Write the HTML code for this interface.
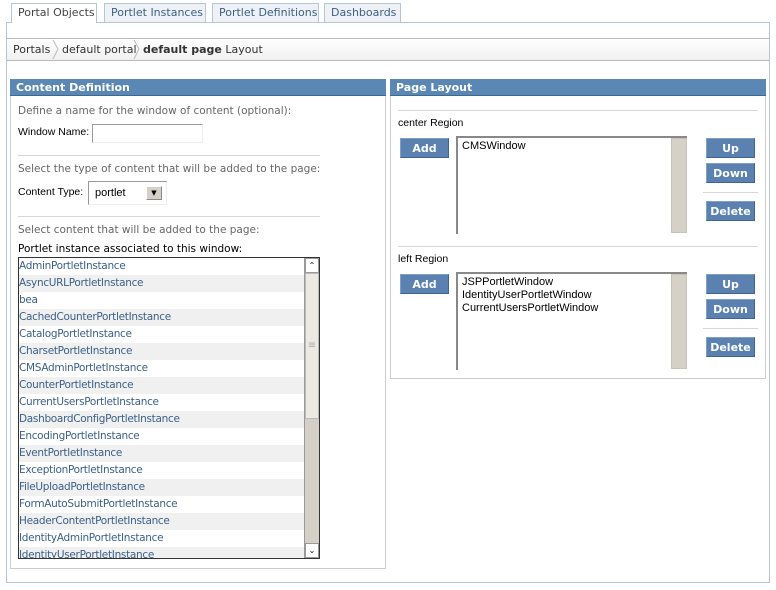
<!DOCTYPE html>
<html><head><meta charset="utf-8"><style>
*{margin:0;padding:0;box-sizing:border-box}
body{width:776px;height:590px;background:#fff;font-family:"DejaVu Sans","Liberation Sans",sans-serif;font-size:10.5px;color:#000;position:relative;overflow:hidden}
.a{position:absolute}
.tab{position:absolute;top:3px;height:20px;border:1px solid #b7c6d0;border-bottom:none;background:#eef2f6;color:#3a5f88;font-size:11px;line-height:17px;padding-left:6px}
.tab.on{background:#fff;color:#444;height:20px}
.hdr{position:absolute;height:17px;background:#5a87b3;color:#fff;font-weight:bold;font-size:11px;line-height:17px;padding-left:6px;border-bottom:1px solid #3f6891}
.btn{position:absolute;width:49px;height:20px;background:#5a81b0;color:#fff;font-weight:bold;font-size:11px;text-align:center;line-height:19px;border:1px solid #3d6590;border-top-color:#7f9fc4;border-left-color:#7f9fc4}
.hr{position:absolute;height:1px;background:#d6d6d6}
.g{color:#666}
.lab{font-family:"Liberation Sans",sans-serif;font-size:10.5px}
.ta{position:absolute;background:#fff;border:2px solid #888;border-right:none;border-bottom:none;font-family:"Liberation Sans",sans-serif;font-size:11px;padding:2px 4px;line-height:13px}
.sb{position:absolute;width:16px;background:#d6d1c7;border:1px solid #c8c3b8}
.li{height:17px;line-height:17px;color:#3a5f88;padding-left:0;white-space:nowrap;letter-spacing:-0.3px}
.li:nth-child(even){background:#f0f0f0}
</style></head><body>
<div class="tab on" style="left:11px;width:86px">Portal Objects</div>
<div class="tab" style="left:104px;width:102px">Portlet Instances</div>
<div class="tab" style="left:212px;width:107px">Portlet Definitions</div>
<div class="tab" style="left:324px;width:77px">Dashboards</div>
<div class="a" style="left:6px;top:22px;width:764px;height:561px;border:1px solid #b7c6d0"></div>
<div class="a" style="left:12px;top:22px;width:84px;height:1px;background:#fff"></div>
<div class="a" style="left:7px;top:38px;width:762px;height:23px;border-top:1px solid #bbb;border-bottom:1px solid #bbb;background:linear-gradient(#fff,#f0f0f0);font-size:11px;line-height:21px;color:#333">
<span style="position:absolute;left:6px">Portals</span>
<svg style="position:absolute;left:45px;top:0" width="8" height="21"><path d="M1 1 L6 10 L1 20" fill="none" stroke="#bbb"/></svg>
<span style="position:absolute;left:55px">default portal</span>
<svg style="position:absolute;left:126px;top:0" width="8" height="21"><path d="M1 1 L6 10 L1 20" fill="none" stroke="#bbb"/></svg>
<span style="position:absolute;left:136px"><b>default page</b> Layout</span>
</div>

<div class="a" style="left:10px;top:79px;width:376px;height:490px;border:1px solid #ccc"></div>
<div class="hdr" style="left:10px;top:79px;width:376px">Content Definition</div>
<div class="a g" style="left:18px;top:105px">Define a name for the window of content (optional):</div>
<div class="a lab" style="left:18px;top:126px">Window Name:</div>
<div class="a" style="left:92px;top:124px;width:111px;height:19px;border:1px solid #999;border-right-color:#eee;border-bottom-color:#eee"></div>
<div class="hr" style="left:18px;top:155px;width:302px"></div>
<div class="a g" style="left:18px;top:163px">Select the type of content that will be added to the page:</div>
<div class="a lab" style="left:18px;top:186px">Content Type:</div>
<div class="a" style="left:88px;top:181px;width:79px;height:24px;border:1px solid #999;border-right-color:#eee;border-bottom-color:#eee;font-family:'Liberation Sans',sans-serif;font-size:11px;padding:5px 6px">portlet</div>
<div class="a" style="left:146px;top:186px;width:16px;height:14px;border:1px solid #888;border-left-color:#fff;border-top-color:#fff;background:#d4d0c8;font-size:7px;text-align:center;line-height:12px">▼</div>
<div class="hr" style="left:18px;top:216px;width:302px"></div>
<div class="a g" style="left:18px;top:224px">Select content that will be added to the page:</div>
<div class="a" style="left:18px;top:243px">Portlet instance associated to this window:</div>
<div class="a" style="left:18px;top:257px;width:302px;height:302px;border:1px solid #333;overflow:hidden;background:#fff">
<div style="position:absolute;left:0;top:0;width:286px">
<div class="li">AdminPortletInstance</div><div class="li">AsyncURLPortletInstance</div><div class="li">bea</div><div class="li">CachedCounterPortletInstance</div><div class="li">CatalogPortletInstance</div><div class="li">CharsetPortletInstance</div><div class="li">CMSAdminPortletInstance</div><div class="li">CounterPortletInstance</div><div class="li">CurrentUsersPortletInstance</div><div class="li">DashboardConfigPortletInstance</div><div class="li">EncodingPortletInstance</div><div class="li">EventPortletInstance</div><div class="li">ExceptionPortletInstance</div><div class="li">FileUploadPortletInstance</div><div class="li">FormAutoSubmitPortletInstance</div><div class="li">HeaderContentPortletInstance</div><div class="li">IdentityAdminPortletInstance</div><div class="li">IdentityUserPortletInstance</div>
</div>
<div style="position:absolute;left:285px;top:0;width:15px;height:300px;background:#d4d0c8;border-left:1px solid #999">
<div style="position:absolute;left:0;top:0;width:14px;height:15px;background:#fff;border:1px solid #999;font-size:8px;text-align:center;line-height:13px">⌃</div>
<div style="position:absolute;left:0;top:15px;width:14px;height:146px;background:#ece9e2;border:1px solid #bbb;color:#aaa;text-align:center;line-height:144px;font-size:10px">≡</div>
<div style="position:absolute;left:0;top:285px;width:14px;height:15px;background:#fff;border:1px solid #999;font-size:8px;text-align:center;line-height:13px">⌄</div>
</div>
</div>

<div class="a" style="left:390px;top:79px;width:376px;height:300px;border:1px solid #ccc"></div>
<div class="hdr" style="left:390px;top:79px;width:376px">Page Layout</div>
<div class="hr" style="left:398px;top:110px;width:360px"></div>
<div class="a lab" style="left:398px;top:117px">center Region</div>
<div class="btn" style="left:400px;top:138px">Add</div>
<div class="ta" style="left:456px;top:136px;width:231px;height:98px">CMSWindow</div>
<div class="sb" style="left:671px;top:138px;height:95px"></div>
<div class="btn" style="left:706px;top:138px">Up</div>
<div class="btn" style="left:706px;top:163px">Down</div>
<div class="hr" style="left:703px;top:192px;width:55px"></div>
<div class="btn" style="left:706px;top:201px">Delete</div>
<div class="hr" style="left:398px;top:246px;width:360px"></div>
<div class="a lab" style="left:398px;top:253px">left Region</div>
<div class="btn" style="left:400px;top:274px">Add</div>
<div class="ta" style="left:456px;top:272px;width:231px;height:98px">JSPPortletWindow<br>IdentityUserPortletWindow<br>CurrentUsersPortletWindow</div>
<div class="sb" style="left:671px;top:274px;height:95px"></div>
<div class="btn" style="left:706px;top:274px">Up</div>
<div class="btn" style="left:706px;top:299px">Down</div>
<div class="hr" style="left:703px;top:328px;width:55px"></div>
<div class="btn" style="left:706px;top:337px">Delete</div>
</body></html>
